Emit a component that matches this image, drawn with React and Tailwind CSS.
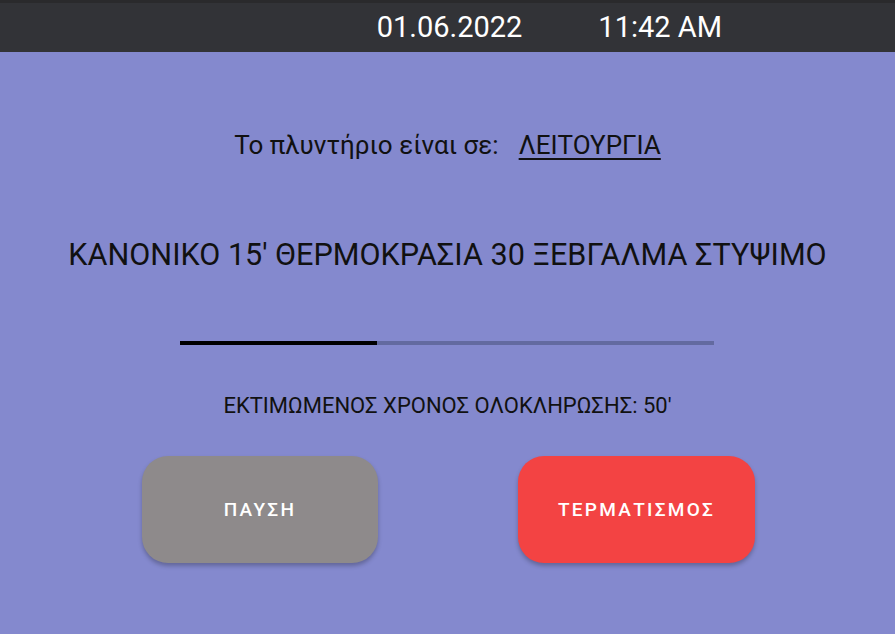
import React from 'react';

function StatusBar() {
  return (
    <div className="h-[52px] bg-[#323337] border-t-[3px] border-[#2a2a2c] flex items-center justify-end pr-[173px] gap-[76px] text-white text-[29px] leading-none">
      <span>01.06.2022</span>
      <span>11:42 AM</span>
    </div>
  );
}

export default function App() {
  const progress = 37;

  return (
    <div className="w-[895px] h-[634px] bg-[#8489ce] flex flex-col font-['Roboto','Noto_Sans',sans-serif] text-[#111]">
      <StatusBar />

      <div className="flex flex-col items-center">
        <div className="mt-[77px] h-[32px] flex items-center text-[26px] gap-[20px]">
          <span>Το πλυντήριο είναι σε:</span>
          <span className="underline underline-offset-[4px] decoration-[1.5px]">ΛΕΙΤΟΥΡΓΙΑ</span>
        </div>

        <div className="mt-[76px] h-[36px] flex items-center text-[30.6px]">
          ΚΑΝΟΝΙΚΟ 15' ΘΕΡΜΟΚΡΑΣΙΑ 30 ΞΕΒΓΑΛΜΑ ΣΤΥΨΙΜΟ
        </div>

        <div className="mt-[68px] w-[534px] h-[4px] bg-[#636aa0] ml-[-2px]">
          <div className="h-full bg-black" style={{ width: `${progress}%` }} />
        </div>

        <div className="mt-[47px] h-[26px] flex items-center text-[22px]">
          ΕΚΤΙΜΩΜΕΝΟΣ ΧΡΟΝΟΣ ΟΛΟΚΛΗΡΩΣΗΣ: 50'
        </div>

        <div className="mt-[38px] w-full flex justify-between pl-[142px] pr-[140px]">
          <button className="w-[236px] h-[107px] rounded-[26px] bg-[#8e8a8b] text-white text-[19px] font-medium tracking-[0.12em] pt-[2px] shadow-[0_3px_4px_rgba(0,0,0,0.25)]">
            ΠΑΥΣΗ
          </button>
          <button className="w-[237px] h-[107px] rounded-[26px] bg-[#f34343] text-white text-[19px] font-medium tracking-[0.12em] pt-[2px] shadow-[0_3px_4px_rgba(0,0,0,0.25)]">
            ΤΕΡΜΑΤΙΣΜΟΣ
          </button>
        </div>
      </div>
    </div>
  );
}
